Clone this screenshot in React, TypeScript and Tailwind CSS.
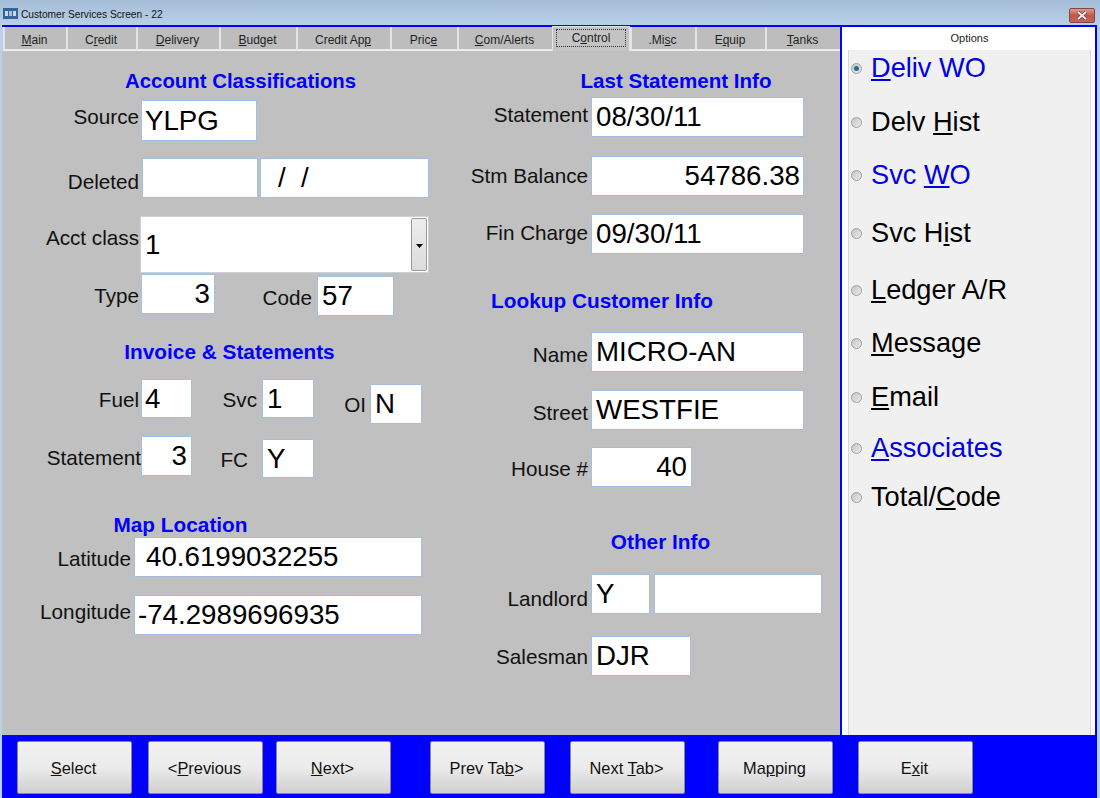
import React from 'react';

const TABS = [
  { pre: '', key: 'M', post: 'ain', width: 'w-[63px]' },
  { pre: 'C', key: 'r', post: 'edit', width: 'w-[70px]' },
  { pre: '', key: 'D', post: 'elivery', width: 'w-[83px]' },
  { pre: '', key: 'B', post: 'udget', width: 'w-[77px]' },
  { pre: 'Credit Ap', key: 'p', post: '', width: 'w-[94px]' },
  { pre: 'Pric', key: 'e', post: '', width: 'w-[67px]' },
  { pre: '', key: 'C', post: 'om/Alerts', width: 'w-[95px]' },
  { pre: 'C', key: 'o', post: 'ntrol', width: 'w-[78px]', active: true },
  { pre: '.Mi', key: 's', post: 'c', width: 'w-[65px]' },
  { pre: 'E', key: 'q', post: 'uip', width: 'w-[70px]' },
  { pre: '', key: 'T', post: 'anks', width: 'w-[75px]' },
];

const OPTIONS = [
  { pre: '', key: 'D', post: 'eliv WO', blue: true, checked: true, gap: 'mt-[2px]' },
  { pre: 'Delv ', key: 'H', post: 'ist', gap: 'mt-[22px]' },
  { pre: 'Svc ', key: 'W', post: 'O', blue: true, gap: 'mt-[21px]' },
  { pre: 'Svc H', key: 'i', post: 'st', gap: 'mt-[26px]' },
  { pre: '', key: 'L', post: 'edger A/R', gap: 'mt-[25px]' },
  { pre: '', key: 'M', post: 'essage', gap: 'mt-[21px]' },
  { pre: '', key: 'E', post: 'mail', gap: 'mt-[22px]' },
  { pre: '', key: 'A', post: 'ssociates', blue: true, gap: 'mt-[19px]' },
  { pre: 'Total/', key: 'C', post: 'ode', gap: 'mt-[17px]' },
];

const BUTTONS = [
  { pre: '', key: 'S', post: 'elect', gap: 'ml-[15px]' },
  { pre: '<', key: 'P', post: 'revious', gap: 'ml-[16px]' },
  { pre: '', key: 'N', post: 'ext>', gap: 'ml-[13px]' },
  { pre: 'Prev Ta', key: 'b', post: '>', gap: 'ml-[39px]' },
  { pre: 'Next ', key: 'T', post: 'ab>', gap: 'ml-[25px]' },
  { pre: 'Ma', key: 'p', post: 'ping', gap: 'ml-[33px]' },
  { pre: 'E', key: 'x', post: 'it', gap: 'ml-[25px]' },
];

const Label = ({ className, children }: { className: string; children: React.ReactNode }) => (
  <div className={`flex shrink-0 justify-end whitespace-nowrap text-[20.7px] leading-[24px] text-[#111] ${className}`}>{children}</div>
);

const Input = ({ className, children }: { className: string; children?: React.ReactNode }) => (
  <div className={`flex shrink-0 items-center whitespace-pre border border-[#a3c0e2] bg-white text-[27.7px] leading-none text-black ${className}`}>
    {children}
  </div>
);

const Heading = ({ className, children }: { className: string; children: React.ReactNode }) => (
  <div className={`whitespace-nowrap text-center font-bold leading-[24px] text-[#0000ff] ${className}`}>{children}</div>
);

export default function App() {
  return (
    <div className="flex h-[798px] w-[1100px] flex-col overflow-hidden bg-[#b9d1ea] font-['Liberation_Sans',Arial,sans-serif]">
      {/* title bar */}
      <div className="flex h-[25px] shrink-0 items-start bg-gradient-to-b from-[#a3bbd5] to-[#b9d2ea] pl-[3px] pr-[5px]">
        <svg width="15" height="11" viewBox="0 0 15 11" className="mt-[8px]">
          <rect width="15" height="11" fill="#33659a" />
          <rect x="2" y="3" width="3" height="5" fill="#c9d8e8" />
          <rect x="6" y="3" width="3" height="5" fill="#a9c1da" />
          <rect x="10" y="3" width="3" height="5" fill="#c9d8e8" />
        </svg>
        <span className="ml-[3px] mt-[9px] text-[10.2px] leading-[12px] text-[#111]">Customer Services Screen - 22</span>
        <div className="ml-auto mt-[8px] flex h-[15px] w-[26px] items-center justify-center rounded-[2px] border border-[#7c4a45] bg-gradient-to-b from-[#dc9a90] via-[#c4564a] to-[#c0685c]">
          <svg width="12" height="9" viewBox="0 0 12 9">
            <path d="M2 1 L10 8 M10 1 L2 8" stroke="#6b3a36" strokeWidth="3.4" />
            <path d="M2 1 L10 8 M10 1 L2 8" stroke="#f4f4f4" strokeWidth="2" />
          </svg>
        </div>
      </div>

      <div className="flex flex-1 flex-col pl-[2px] pr-[3px]">
        <div className="flex h-[710px] shrink-0 border-t-2 border-[#0000ff]">
          {/* tabs + form */}
          <div className="flex w-[838px] shrink-0 flex-col bg-[#c0c0c0]">
            <div className="flex h-[24px] shrink-0 items-stretch bg-[#b9d1ea] pl-[1px] text-[12px] text-[#222]">
              {TABS.map(tab =>
                tab.active ? (
                  <div key={tab.key + tab.post} className={`${tab.width} -mt-[1px] flex items-center justify-center border-x border-t border-x-[#e4e4e4] border-t-[#e4e4e4] bg-[#c4c4c4] px-[3px] pb-[4px] pt-[2px]`}>
                    <div className="flex h-full w-full items-center justify-center border border-dotted border-[#333]">
                      <span>{tab.pre}<u>{tab.key}</u>{tab.post}</span>
                    </div>
                  </div>
                ) : (
                  <div key={tab.key + tab.post} className={`${tab.width} flex items-center justify-center border-b-2 border-l-2 border-b-[#ececec] border-l-[#e4e4e4] bg-[#bdbdbd] pr-[2px] pt-[3px]`}>
                    <span>{tab.pre}<u>{tab.key}</u>{tab.post}</span>
                  </div>
                )
              )}
            </div>

            <div className="flex flex-1">
              {/* left column */}
              <div className="flex w-[438px] shrink-0 flex-col">
                <Heading className="ml-[123px] mt-[18px] w-[231px] text-[20.4px]">Account Classifications</Heading>
                <div className="mt-[7px] flex items-start">
                  <Label className="mt-[5px] w-[137px]">Source</Label>
                  <Input className="ml-[2px] h-[41px] w-[116px] pl-[3px]">YLPG</Input>
                </div>
                <div className="mt-[17px] flex items-start">
                  <Label className="mt-[12px] w-[137px]">Deleted</Label>
                  <Input className="ml-[3px] h-[40px] w-[116px]" />
                  <Input className="ml-[2px] h-[40px] w-[169px] pl-[17px]">/  /</Input>
                </div>
                <div className="mt-[18px] flex items-start">
                  <Label className="mt-[10px] w-[137px]">Acct class</Label>
                  <Input className="ml-[1px] h-[57px] w-[289px] justify-between border-[#c9d2dc] pl-[4px]">
                    <span className="mt-[1px]">1</span>
                    <div className="mr-[1px] flex h-[53px] w-[16px] items-center justify-center rounded-[2px] border border-[#9a9a9a] bg-gradient-to-b from-[#ededed] to-[#dcdcdc]">
                      <svg width="7" height="4" viewBox="0 0 7 4" className="mt-[2px]">
                        <path d="M0 0 H7 L3.5 4 Z" fill="#000" />
                      </svg>
                    </div>
                  </Input>
                </div>
                <div className="mt-[1px] flex items-start">
                  <Label className="mt-[10px] w-[137px]">Type</Label>
                  <Input className="ml-[2px] h-[40px] w-[74px] justify-end pr-[4px]">3</Input>
                  <Label className="ml-[46px] mt-[12px] w-[51px]">Code</Label>
                  <Input className="ml-[5px] mt-[2px] h-[40px] w-[77px] pl-[4px]">57</Input>
                </div>
                <Heading className="ml-[121px] mt-[24px] w-[213px] text-[20.8px]">Invoice &amp; Statements</Heading>
                <div className="mt-[15px] flex items-start">
                  <Label className="mt-[9px] w-[137px]">Fuel</Label>
                  <Input className="ml-[2px] h-[39px] w-[51px] pl-[3px]">4</Input>
                  <Label className="ml-[30px] mt-[9px] w-[35px]">Svc</Label>
                  <Input className="ml-[5px] h-[39px] w-[52px] pl-[4px]">1</Input>
                  <Label className="ml-[30px] mt-[14px] w-[22px]">OI</Label>
                  <Input className="ml-[4px] mt-[5px] h-[40px] w-[52px] pl-[4px]">N</Input>
                </div>
                <div className="mt-[12px] flex items-start">
                  <Label className="mt-[10px] w-[139px]">Statement</Label>
                  <Input className="h-[40px] w-[51px] justify-end pr-[4px]">3</Input>
                  <Label className="ml-[28px] mt-[12px] w-[28px]">FC</Label>
                  <Input className="ml-[14px] mt-[3px] h-[39px] w-[52px] pl-[4px]">Y</Input>
                </div>
                <Heading className="ml-[110px] mt-[35px] w-[137px] text-[20.8px]">Map Location</Heading>
                <div className="flex items-start">
                  <Label className="mt-[10px] w-[129px]">Latitude</Label>
                  <Input className="ml-[3px] h-[40px] w-[288px] pl-[11px]">40.6199032255</Input>
                </div>
                <div className="mt-[18px] flex items-start">
                  <Label className="mt-[5px] w-[129px]">Longitude</Label>
                  <Input className="ml-[3px] h-[40px] w-[288px] pl-[3px]">-74.2989696935</Input>
                </div>
              </div>

              {/* right column */}
              <div className="flex flex-1 flex-col">
                <Heading className="ml-[139px] mt-[18px] w-[194px] text-[20.6px]">Last Statement Info</Heading>
                <div className="mt-[4px] flex items-start">
                  <Label className="mt-[6px] w-[148px]">Statement</Label>
                  <Input className="ml-[3px] h-[40px] w-[213px] pl-[4px]">08/30/11</Input>
                </div>
                <div className="mt-[19px] flex items-start">
                  <Label className="mt-[8px] w-[148px]">Stm Balance</Label>
                  <Input className="ml-[3px] h-[40px] w-[213px] justify-end pr-[3px]">54786.38</Input>
                </div>
                <div className="mt-[18px] flex items-start">
                  <Label className="mt-[7px] w-[148px]">Fin Charge</Label>
                  <Input className="ml-[3px] h-[40px] w-[213px] pl-[4px]">09/30/11</Input>
                </div>
                <Heading className="ml-[50px] mt-[35px] w-[224px] text-[20.8px]">Lookup Customer Info</Heading>
                <div className="mt-[19px] flex items-start">
                  <Label className="mt-[11px] w-[148px]">Name</Label>
                  <Input className="ml-[3px] h-[40px] w-[213px] pl-[4px]">MICRO-AN</Input>
                </div>
                <div className="mt-[18px] flex items-start">
                  <Label className="mt-[11px] w-[148px]">Street</Label>
                  <Input className="ml-[3px] h-[40px] w-[213px] pl-[4px]">WESTFIE</Input>
                </div>
                <div className="mt-[17px] flex items-start">
                  <Label className="mt-[10px] w-[148px]">House #</Label>
                  <Input className="ml-[3px] h-[40px] w-[101px] justify-end pr-[4px]">40</Input>
                </div>
                <Heading className="ml-[169px] mt-[43px] w-[103px] text-[20.8px]">Other Info</Heading>
                <div className="mt-[20px] flex items-start">
                  <Label className="mt-[13px] w-[148px]">Landlord</Label>
                  <Input className="ml-[3px] h-[40px] w-[59px] pl-[4px]">Y</Input>
                  <Input className="ml-[4px] h-[40px] w-[168px]" />
                </div>
                <div className="mt-[22px] flex items-start">
                  <Label className="mt-[9px] w-[148px]">Salesman</Label>
                  <Input className="ml-[3px] h-[40px] w-[100px] pl-[4px]">DJR</Input>
                </div>
              </div>
            </div>
          </div>

          {/* options panel */}
          <div className="flex flex-1 flex-col border-x-2 border-x-[#0000ff] bg-white pl-[6px] pr-[4px]">
            <div className="flex h-[23px] shrink-0 items-center justify-center text-[11px] text-[#222]">Options</div>
            <div className="flex-1 border-x border-x-[#d8d8d8] bg-[#f0f0f0]">
              {OPTIONS.map(opt => (
                <div key={opt.key + opt.post} className={`flex h-[32px] items-center pl-[2px] ${opt.gap}`}>
                  <div className="flex h-[11px] w-[11px] shrink-0 items-center justify-center rounded-full border border-[#a0a0a0] bg-gradient-to-br from-[#c4c4c4] to-[#ececec]">
                    {opt.checked && <div className="h-[5px] w-[5px] rounded-full bg-[#1c6f9c]" />}
                  </div>
                  <span className={`ml-[9px] whitespace-nowrap text-[27.2px] leading-none ${opt.blue ? 'text-[#0000e0]' : 'text-black'}`}>
                    {opt.pre}<u>{opt.key}</u>{opt.post}
                  </span>
                </div>
              ))}
            </div>
          </div>
        </div>

        {/* bottom buttons */}
        <div className="flex flex-1 items-start bg-[#0000ff] pt-[6px]">
          {BUTTONS.map(btn => (
            <div
              key={btn.key + btn.post}
              className={`flex h-[53px] w-[115px] shrink-0 items-center justify-center rounded-[2px] border border-[#8a8a8a] bg-gradient-to-b from-[#f2f2f2] via-[#ebebeb] to-[#cfcfcf] pr-[2px] pt-[2px] text-[16.4px] text-[#111] ${btn.gap}`}
            >
              <span>{btn.pre}<u>{btn.key}</u>{btn.post}</span>
            </div>
          ))}
        </div>
      </div>
    </div>
  );
}
